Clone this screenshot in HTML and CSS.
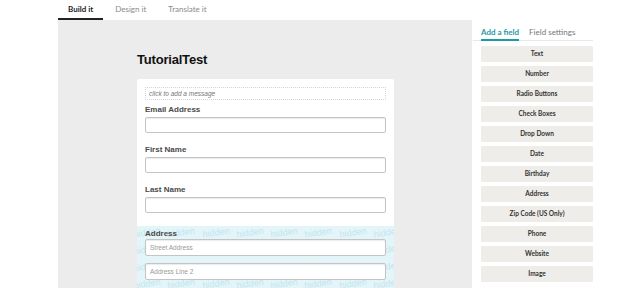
FILE: index.html
```html
<!DOCTYPE html>
<html lang="en">
<head>
    <meta charset="UTF-8">
    <title>Form Builder</title>
    <link rel="stylesheet" href="styles.css">
</head>
<body>
    <div class="topbar">
        <a class="tab active">Build it</a>
        <a class="tab">Design it</a>
        <a class="tab">Translate it</a>
    </div>
    <div class="workspace">
        <div class="gutter"></div>
        <div class="canvas">
            <h1 class="form-title">TutorialTest</h1>
            <div class="card">
                <div class="msg">click to add a message</div>
                <div class="field">
                    <label>Email Address</label>
                    <div class="input"></div>
                </div>
                <div class="field">
                    <label>First Name</label>
                    <div class="input"></div>
                </div>
                <div class="field">
                    <label>Last Name</label>
                    <div class="input"></div>
                </div>
                <div class="field field-hidden">
                    <div class="watermark" id="watermark" aria-hidden="true"></div>
                    <label>Address</label>
                    <div class="input tall">Street Address</div>
                    <div class="input tall">Address Line 2</div>
                </div>
            </div>
        </div>
        <div class="panel">
            <div class="panel-tabs">
                <span class="ptab active">Add a field</span>
                <span class="ptab">Field settings</span>
            </div>
            <div class="btn">Text</div>
            <div class="btn">Number</div>
            <div class="btn">Radio Buttons</div>
            <div class="btn">Check Boxes</div>
            <div class="btn">Drop Down</div>
            <div class="btn">Date</div>
            <div class="btn">Birthday</div>
            <div class="btn">Address</div>
            <div class="btn">Zip Code (US Only)</div>
            <div class="btn">Phone</div>
            <div class="btn">Website</div>
            <div class="btn">Image</div>
        </div>
    </div>

    <script>
        // fill the "hidden" pattern behind the address block
        var wm = document.getElementById("watermark");
        for (var i = 0; i < 32; i++) {
            var s = document.createElement("span");
            s.textContent = "hidden";
            wm.appendChild(s);
        }
    </script>
</body>
</html>
```

FILE: styles.css
```css
* {
    margin: 0;
    padding: 0;
    box-sizing: border-box;
}

body, html {
    height: 100%;
    width: 100%;
    background: #ffffff;
    font-family: "Liberation Sans", Arial, sans-serif;
    overflow: hidden;
}

.topbar {
    height: 20px;
    display: flex;
    padding-left: 58px;
}

.tab {
    font-family: Lato, sans-serif;
    font-size: 8px;
    color: #8a8a8a;
    padding: 4px 10px 0;
    height: 20px;
    border-bottom: 2px solid transparent;
}

.tab.active {
    color: #222;
    font-weight: bold;
    border-bottom-color: #222;
}

.tab + .tab {
    margin-left: 2px;
}

.workspace {
    display: flex;
    height: 268px;
}

.gutter {
    width: 58px;
}

.canvas {
    width: 414px;
    background: #ececec;
    padding: 32px 0 0 79px;
}

.form-title {
    font-size: 13px;
    font-weight: bold;
    color: #111;
    height: 27px;
    letter-spacing: -0.2px;
}

.card {
    width: 257px;
    background: #fff;
    border-radius: 2px;
    padding-top: 8px;
    height: 220px;
    overflow: hidden;
}

.msg {
    margin: 0 8px 4px;
    height: 13px;
    border: 1px dotted #d4d4d4;
    font-size: 6.5px;
    font-style: italic;
    color: #777;
    padding: 2px 3px;
}

.field {
    padding: 0 8px 11px;
}

.field label {
    display: block;
    font-size: 8px;
    font-weight: bold;
    color: #4a4a4a;
    line-height: 11px;
    margin-bottom: 2px;
}

.input {
    height: 16px;
    background: #fff;
    border: 1px solid #c4c4c4;
    border-radius: 2px;
    box-shadow: inset 0 1px 1px rgba(0, 0, 0, 0.08);
    font-size: 6.5px;
    color: #999;
    padding: 4px 4px 0;
}

.input.tall {
    height: 17px;
    margin-bottom: 7px;
    position: relative;
}

.field-hidden {
    position: relative;
    margin-top: 2px;
    padding-top: 2px;
    background: #e4f5f9;
    height: 62px;
    overflow: hidden;
}

.field-hidden label {
    position: relative;
    margin-bottom: 0;
}

.watermark {
    position: absolute;
    top: 1px;
    left: -3px;
    width: 280px;
    height: 62px;
    display: flex;
    flex-wrap: wrap;
    overflow: hidden;
}

.watermark span {
    width: 34.3px;
    height: 17px;
    font-size: 9px;
    color: #c3e5ee;
    transform: rotate(-8deg);
}

.panel {
    flex: 1;
    padding: 0 34px 0 9px;
}

.panel-tabs {
    display: flex;
    gap: 10px;
    height: 21px;
    padding-top: 7px;
    border-bottom: 1px solid #e8e8e8;
    margin: 0 0 5px -8px;
    padding-left: 8px;
}

.ptab {
    font-family: Lato, sans-serif;
    font-size: 8px;
    color: #777;
    height: 14px;
}

.ptab.active {
    color: #1f9aa5;
    font-weight: bold;
    border-bottom: 2px solid #1f9aa5;
}

.btn {
    height: 16px;
    margin-bottom: 4px;
    background: #eeede9;
    border-radius: 1px;
    font-family: Lato, sans-serif;
    font-size: 6.5px;
    font-weight: bold;
    color: #333;
    text-align: center;
    line-height: 16px;
}
```
